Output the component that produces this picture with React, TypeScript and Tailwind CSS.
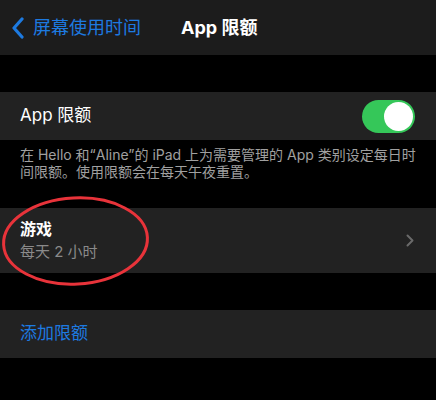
import React from "react";

const font = { fontFamily: '"Inter", "Noto Sans CJK SC", sans-serif' };

export default function App() {
  return (
    <div
      className="relative w-[436px] h-[400px] bg-black overflow-hidden"
      style={font}
    >
      {/* Nav bar */}
      <div className="h-[55px] bg-[#1c1c1c] flex items-center relative">
        <div className="flex items-center pl-[10px] text-[#1d7ae0]">
          <svg width="16" height="22" viewBox="0 0 16 22" className="mr-[7px]">
            <path
              d="M12 2 L4 11 L12 20"
              fill="none"
              stroke="#1d7ae0"
              strokeWidth="3.2"
              strokeLinecap="round"
              strokeLinejoin="round"
            />
          </svg>
          <span className="text-[18px] leading-none">屏幕使用时间</span>
        </div>
        <div className="absolute left-[181px] top-0 h-full flex items-center text-white text-[18px] font-bold leading-none">
          App 限额
        </div>
      </div>

      <div className="h-[37px]" />

      {/* Toggle row */}
      <div className="h-[48px] bg-[#222222] flex items-center justify-between pl-[20px] pr-[21px]">
        <span className="text-white text-[17px]">App 限额</span>
        <div className="w-[53px] h-[33px] rounded-full bg-[#35c759] flex items-center justify-end pr-[2px]">
          <div className="w-[29px] h-[29px] rounded-full bg-white" />
        </div>
      </div>

      {/* Description */}
      <div className="pl-[20px] pr-[10px] pt-[6px] text-[14px] leading-[17px] text-[#a0a0a0] whitespace-nowrap">
        在 Hello 和“Aline”的 iPad 上为需要管理的 App 类别设定每日时
        <br />
        间限额。使用限额会在每天午夜重置。
      </div>

      <div className="h-[28px]" />

      {/* Game row */}
      <div className="h-[65px] bg-[#222222] flex items-center justify-between pl-[20px] pr-[22px]">
        <div className="flex flex-col">
          <span className="text-white text-[16px] font-bold leading-[22px]">游戏</span>
          <span className="text-[#8a8a8a] text-[15px] leading-[22px] mt-[1px]">每天 2 小时</span>
        </div>
        <svg width="8" height="13" viewBox="0 0 8 13">
          <path
            d="M1.5 1.5 L6.5 6.5 L1.5 11.5"
            fill="none"
            stroke="#6a6a6a"
            strokeWidth="2"
            strokeLinecap="round"
            strokeLinejoin="round"
          />
        </svg>
      </div>

      <div className="h-[37px]" />

      {/* Add limit row */}
      <div className="h-[48px] bg-[#222222] flex items-center pl-[20px]">
        <span className="text-[#1d7ae0] text-[17px]">添加限额</span>
      </div>

      {/* Red annotation ellipse */}
      <svg
        className="absolute left-0 top-[190px] pointer-events-none"
        width="160"
        height="100"
        viewBox="0 0 160 100"
      >
        <ellipse
          cx="75.5"
          cy="51"
          rx="72"
          ry="43"
          fill="none"
          stroke="#e8333a"
          strokeWidth="3"
          transform="rotate(-3 75.5 51)"
        />
      </svg>
    </div>
  );
}
